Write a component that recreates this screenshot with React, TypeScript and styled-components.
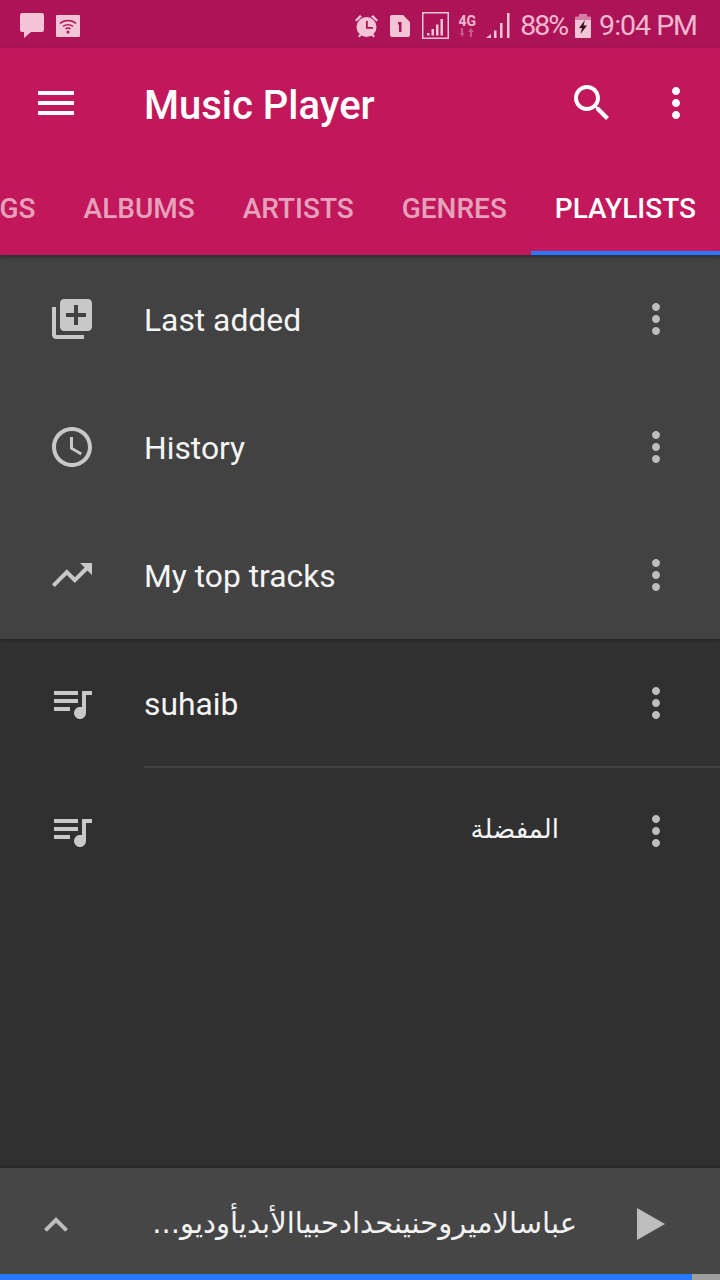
import React from 'react';
import styled, { createGlobalStyle } from 'styled-components';

const GlobalStyle = createGlobalStyle`
    html, body {
        margin: 0;
        padding: 0;
        background: #303030;
        font-family: Roboto, "Noto Sans", sans-serif;
    }
`;

const Page = styled.div`
    display: flex;
    flex-direction: column;
    width: 720px;
    height: 1280px;
    overflow: hidden;
    color: #fff;
`;

const StatusBar = styled.div`
    display: flex;
    justify-content: space-between;
    align-items: center;
    flex: 0 0 48px;
    padding: 3px 23px 0 20px;
    box-sizing: border-box;
    background: #ad1457;
    color: #f0b8d0;
`;

const StatusGroup = styled.div`
    display: flex;
    align-items: center;
`;

const StatusIcon = styled.svg<{ $gap?: number }>`
    display: block;
    fill: #f3c3d6;
    margin-left: ${(p) => p.$gap ?? 0}px;
`;

const StatusText = styled.span<{ $gap: number; $spacing: number }>`
    font-size: 28.5px;
    line-height: 44px;
    margin-left: ${(p) => p.$gap}px;
    letter-spacing: ${(p) => p.$spacing}px;
`;

const Network = styled.div`
    display: flex;
    flex-direction: column;
    align-items: center;
    width: 20px;
    margin-left: 8px;
`;

const NetworkLabel = styled.span`
    font-size: 14px;
    font-weight: 700;
    line-height: 14px;
`;

const Header = styled.header`
    display: flex;
    flex-direction: column;
    flex: 0 0 207px;
    background: #c2185b;
    box-shadow: 0 2px 4px rgba(0, 0, 0, 0.35);
    position: relative;
    z-index: 2;
`;

const Toolbar = styled.div`
    display: flex;
    align-items: center;
    height: 112px;
    padding: 0 20px 0 32px;
    box-sizing: border-box;
`;

const ToolbarIcon = styled.svg<{ $gap?: number }>`
    display: block;
    width: 48px;
    height: 48px;
    fill: #fff;
    margin-left: ${(p) => p.$gap ?? 0}px;
    margin-bottom: 2px;
`;

const Title = styled.h1`
    flex: 1;
    margin: 3px 0 0 64px;
    font-size: 40px;
    font-weight: 500;
    line-height: 48px;
`;

const Tabs = styled.nav`
    display: flex;
    justify-content: flex-end;
    flex: 1;
    overflow: hidden;
`;

const Tab = styled.div<{ $active?: boolean }>`
    flex-shrink: 0;
    display: flex;
    align-items: center;
    padding: 6px 24px 0;
    box-sizing: border-box;
    height: 95px;
    font-size: 28px;
    font-weight: 500;
    text-transform: uppercase;
    color: ${(p) => (p.$active ? '#fff' : 'rgba(255, 255, 255, 0.6)')};
    border-bottom: 4px solid ${(p) => (p.$active ? '#2979ff' : 'transparent')};
`;

const List = styled.main`
    flex: 1;
    background: #303030;
`;

const SmartLists = styled.section`
    background: #424242;
    box-shadow: 0 1px 3px rgba(0, 0, 0, 0.35);
    position: relative;
    z-index: 1;
`;

const Row = styled.div`
    display: flex;
    align-items: center;
    height: 128px;
    padding: 0 40px 0 48px;
    box-sizing: border-box;
`;

const RowIcon = styled.svg`
    display: block;
    flex-shrink: 0;
    width: 48px;
    height: 48px;
    fill: #c8c8c8;
`;

const RowTitle = styled.div`
    flex: 1;
    margin: 2px 73px 0 48px;
    font-size: 31.8px;
    line-height: 48px;
    font-family: Roboto, "Noto Sans", "DejaVu Sans", sans-serif;
    color: #f5f5f5;
`;

const ArabicTitle = styled(RowTitle)`
    font-size: 26px;
    margin-top: 0;
    margin-bottom: 4px;
`;

const MoreIcon = styled(RowIcon)`
    fill: #bdbdbd;
`;

const Divider = styled.div`
    height: 2px;
    margin: -1px 0 -1px 144px;
    background: #424242;
`;

const MiniPlayer = styled.footer`
    flex: 0 0 112px;
    display: flex;
    flex-direction: column;
    background: #464646;
    box-shadow: 0 -1px 3px rgba(0, 0, 0, 0.3);
    position: relative;
`;

const MiniContent = styled.div`
    flex: 1;
    display: flex;
    align-items: center;
    padding: 6px 55px 0 32px;
`;

const Chevron = styled.svg`
    display: block;
    width: 48px;
    height: 48px;
    fill: #bdbdbd;
    margin-top: 2px;
`;

const MiniTitle = styled.div`
    flex: 1;
    margin: 0 60px 2px 0;
    font-size: 29px;
    line-height: 44px;
    white-space: nowrap;
    overflow: hidden;
    font-family: "DejaVu Sans", sans-serif;
    color: #f2f2f2;
`;

const PlayIcon = styled.svg`
    display: block;
    width: 28px;
    height: 32px;
    fill: #bdbdbd;
`;

const Progress = styled.div`
    height: 6px;
    background: #9e9e9e;
`;

const ProgressFill = styled.div`
    height: 100%;
    background: #2979ff;
`;

const paths = {
    menu: 'M3 18h18v-2H3v2zm0-5h18v-2H3v2zm0-7v2h18V6H3z',
    search: 'M15.5 14h-.79l-.28-.27C15.41 12.59 16 11.11 16 9.5 16 5.91 13.09 3 9.5 3S3 5.91 3 9.5 5.91 16 9.5 16c1.61 0 3.09-.59 4.23-1.57l.27.28v.79l5 4.99L20.49 19l-4.99-5zm-6 0C7.01 14 5 11.99 5 9.5S7.01 5 9.5 5 14 7.01 14 9.5 11.99 14 9.5 14z',
    more: 'M12 8c1.1 0 2-.9 2-2s-.9-2-2-2-2 .9-2 2 .9 2 2 2zm0 2c-1.1 0-2 .9-2 2s.9 2 2 2 2-.9 2-2-.9-2-2-2zm0 6c-1.1 0-2 .9-2 2s.9 2 2 2 2-.9 2-2-.9-2-2-2z',
    libraryAdd: 'M4 6H2v14c0 1.1.9 2 2 2h14v-2H4V6zm16-4H8c-1.1 0-2 .9-2 2v12c0 1.1.9 2 2 2h12c1.1 0 2-.9 2-2V4c0-1.1-.9-2-2-2zm-1 9h-4v4h-2v-4H9V9h4V5h2v4h4v2z',
    history: 'M11.99 2C6.47 2 2 6.48 2 12s4.47 10 9.99 10C17.52 22 22 17.52 22 12S17.52 2 11.99 2zM12 20c-4.42 0-8-3.58-8-8s3.58-8 8-8 8 3.58 8 8-3.58 8-8 8zM12.5 7H11v6l5.25 3.15.75-1.23-4.5-2.67z',
    trending: 'M16 6l2.29 2.29-4.88 4.88-4-4L2 16.59 3.41 18l6-6 4 4 6.3-6.29L22 12V6z',
    queue: 'M15 6H3v2h12V6zm0 4H3v2h12v-2zM3 16h8v-2H3v2zM17 6v8.18c-.31-.11-.65-.18-1-.18-1.66 0-3 1.34-3 3s1.34 3 3 3 3-1.34 3-3V8h3V6h-5z',
    expand: 'M12 8l-6 6 1.41 1.41L12 10.83l4.59 4.58L18 14z',
};

const tabs = ['Songs', 'Albums', 'Artists', 'Genres', 'Playlists'];

const PlaylistRow: React.FC<{ icon: string; children: React.ReactNode }> = ({ icon, children }) => (
    <Row>
        <RowIcon viewBox="0 0 24 24">
            <path d={icon} />
        </RowIcon>
        {children}
        <MoreIcon viewBox="0 0 24 24">
            <path d={paths.more} />
        </MoreIcon>
    </Row>
);

export default function App() {
    return (
        <Page>
            <GlobalStyle />
            <StatusBar>
                <StatusGroup>
                    <StatusIcon width="24" height="26" viewBox="0 0 24 26">
                        <path d="M2 0h20a2 2 0 0 1 2 2v15a2 2 0 0 1-2 2H11l-7 6v-6H2a2 2 0 0 1-2-2V2a2 2 0 0 1 2-2z" />
                    </StatusIcon>
                    <StatusIcon $gap={12} width="24" height="22" viewBox="0 0 24 22">
                        <path d="M1 0h22a1 1 0 0 1 1 1v20a1 1 0 0 1-1 1H1a1 1 0 0 1-1-1V1a1 1 0 0 1 1-1z" />
                        <g fill="none" stroke="#ad1457" strokeWidth="1.4">
                            <path d="M4 8.5c4.500-4 11.500-4 16 0" />
                            <path d="M7 11.500c2.800-2.500 7.200-2.500 10 0" />
                            <path d="M9.500 14c1.400-1.200 3.600-1.200 5 0" />
                        </g>
                        <circle cx="12" cy="17" r="1.500" fill="#ad1457" />
                    </StatusIcon>
                </StatusGroup>
                <StatusGroup>
                    <StatusIcon width="25" height="26" viewBox="0 0 25 26">
                        <circle cx="12.500" cy="14" r="10" />
                        <path d="M1 7l5-5 2 1.500-5.500 5zM24 7l-5-5-2 1.500 5.500 5zM4 23l2.500-2.500 1.500 1.500-2.500 2.500zM21 23l-2.500-2.500-1.500 1.500 2.500 2.500z" />
                        <path d="M12 8h1.800v6H19v1.800h-7z" fill="#ad1457" />
                    </StatusIcon>
                    <StatusIcon $gap={11} width="20" height="22" viewBox="0 0 20 22">
                        <path d="M2 0h11l7 7v13a2 2 0 0 1-2 2H2a2 2 0 0 1-2-2V2a2 2 0 0 1 2-2z" />
                        <path d="M8 7h3.500v10H9V9.500H8z" fill="#ad1457" />
                    </StatusIcon>
                    <StatusIcon $gap={12} width="27" height="27" viewBox="0 0 27 27">
                        <path d="M0 0h27v27H0zM1.500 1.500v24h24v-24z" />
                        <path d="M5 21h2.500v2.500H5zM9.500 17H12v6.500H9.500zM14 12.500h2.500v11H14zM18.500 7H21v16.500h-2.500z" />
                    </StatusIcon>
                    <Network>
                        <NetworkLabel>4G</NetworkLabel>
                        <StatusIcon width="14" height="10" viewBox="0 0 14 10" opacity="0.4">
                            <path d="M1 0h2v5h1.500L2 9 0 5h1zM11 0l3 4h-2v5h-2V4H8z" />
                        </StatusIcon>
                    </Network>
                    <StatusIcon $gap={9} width="25" height="26" viewBox="0 0 25 26">
                        <path d="M0 25l5-4v4zM8 17.500h2.500V25H8zM14 10h2.500v15H14zM21 0h2.500v25H21z" />
                    </StatusIcon>
                    <StatusText $gap={9} $spacing={-2}>88%</StatusText>
                    <StatusIcon $gap={8} width="16" height="24" viewBox="0 0 16 24">
                        <path d="M4 0h8v2.500h3a1 1 0 0 1 1 1V6H0V3.500a1 1 0 0 1 1-1h3z" opacity="0.6" />
                        <path d="M0 6h16v17a1 1 0 0 1-1 1H1a1 1 0 0 1-1-1z" />
                        <path d="M10 6L4 14h3l-1.500 6L12 11.500H8.500z" fill="#3a1020" />
                    </StatusIcon>
                    <StatusText $gap={8} $spacing={-1}>9:04 PM</StatusText>
                </StatusGroup>
            </StatusBar>
            <Header>
                <Toolbar>
                    <ToolbarIcon viewBox="0 0 24 24">
                        <path d={paths.menu} />
                    </ToolbarIcon>
                    <Title>Music Player</Title>
                    <ToolbarIcon viewBox="0 0 24 24">
                        <path d={paths.search} />
                    </ToolbarIcon>
                    <ToolbarIcon $gap={36} viewBox="0 0 24 24">
                        <path d={paths.more} />
                    </ToolbarIcon>
                </Toolbar>
                <Tabs>
                    {tabs.map((tab) => (
                        <Tab key={tab} $active={tab === 'Playlists'}>
                            {tab}
                        </Tab>
                    ))}
                </Tabs>
            </Header>
            <List>
                <SmartLists>
                    <PlaylistRow icon={paths.libraryAdd}>
                        <RowTitle>Last added</RowTitle>
                    </PlaylistRow>
                    <PlaylistRow icon={paths.history}>
                        <RowTitle>History</RowTitle>
                    </PlaylistRow>
                    <PlaylistRow icon={paths.trending}>
                        <RowTitle>My top tracks</RowTitle>
                    </PlaylistRow>
                </SmartLists>
                <PlaylistRow icon={paths.queue}>
                    <RowTitle>suhaib</RowTitle>
                </PlaylistRow>
                <Divider />
                <PlaylistRow icon={paths.queue}>
                    <ArabicTitle dir="rtl">المفضلة</ArabicTitle>
                </PlaylistRow>
            </List>
            <MiniPlayer>
                <MiniContent>
                    <Chevron viewBox="0 0 24 24">
                        <path d={paths.expand} />
                    </Chevron>
                    <MiniTitle dir="rtl">عباسالاميروحنينحدادحبياالأبديأوديو...</MiniTitle>
                    <PlayIcon viewBox="0 0 28 32">
                        <path d="M0 0l28 16L0 32z" />
                    </PlayIcon>
                </MiniContent>
                <Progress>
                    <ProgressFill style={{ width: `${(692 / 720) * 100}%` }} />
                </Progress>
            </MiniPlayer>
        </Page>
    );
}
